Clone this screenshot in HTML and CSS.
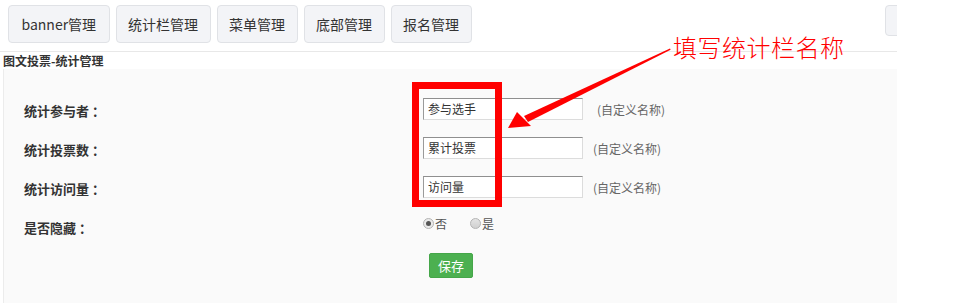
FILE: index.html
```html
<!DOCTYPE html>
<html lang="zh">
<head>
<meta charset="utf-8">
<link rel="stylesheet" href="styles.css">
</head>
<body>
<div class="page">
  <nav class="tabs">
    <a class="tab tab-first">banner管理</a>
    <a class="tab">统计栏管理</a>
    <a class="tab">菜单管理</a>
    <a class="tab">底部管理</a>
    <a class="tab">报名管理</a>
    <a class="tab tab-more"></a>
  </nav>
  <h2 class="title">图文投票-统计管理</h2>
  <section class="panel">
    <div class="row">
      <label class="label">统计参与者<span class="colon">：</span></label>
      <input class="field" type="text" value="参与选手">
      <span class="hint hint-first">(自定义名称)</span>
    </div>
    <div class="row">
      <label class="label">统计投票数<span class="colon">：</span></label>
      <input class="field" type="text" value="累计投票">
      <span class="hint">(自定义名称)</span>
    </div>
    <div class="row">
      <label class="label">统计访问量<span class="colon">：</span></label>
      <input class="field" type="text" value="访问量">
      <span class="hint">(自定义名称)</span>
    </div>
    <div class="row">
      <label class="label">是否隐藏<span class="colon">：</span></label>
      <div class="radios">
        <span class="radio checked"></span><span class="rtext">否</span>
        <span class="radio radio-2"></span><span class="rtext">是</span>
      </div>
    </div>
    <div class="row-btn">
      <button class="save">保存</button>
    </div>
  </section>
</div>
<div class="note">
  <div class="note-box"></div>
  <svg class="note-arrow" width="953" height="303" viewBox="0 0 953 303">
    <polygon points="670,48.5 670.6,49.8 528,122 524,116" fill="#ff0000"/>
    <polygon points="508,128 517,112 531,126" fill="#ff0000"/>
  </svg>
  <div class="note-text">填写统计栏名称</div>
</div>
</body>
</html>
```
FILE: styles.css
```css
* { box-sizing: border-box; }
html, body { margin: 0; padding: 0; background: #fff; }
body {
  font-family: "Noto Sans CJK SC", "Noto Sans", sans-serif;
  color: #333;
  width: 953px;
  height: 303px;
  overflow: hidden;
  position: relative;
}
.page {
  width: 897px;
  height: 303px;
  overflow: hidden;
  display: flex;
  flex-direction: column;
}
.tabs {
  display: flex;
  align-items: flex-start;
  gap: 6px;
  padding: 5px 0 0 8px;
  height: 52px;
  border-bottom: 1px solid #e8e8e8;
}
.tab {
  height: 38px;
  padding: 0 11.5px;
  display: flex;
  align-items: center;
  font-size: 14px;
  color: #333;
  background: #f3f4f7;
  border: 1px solid #e0e2e6;
  border-radius: 4px;
  white-space: nowrap;
}
.tab-first { padding: 0 12.5px; }
.tab-more {
  margin-left: auto;
  margin-right: -20px;
  width: 32px;
  height: 31px;
}
.title {
  margin: 0;
  padding: 1px 0 0 3px;
  height: 17px;
  font-size: 12px;
  line-height: 16px;
  font-weight: bold;
  color: #333;
}
.panel {
  flex: 1;
  margin-left: 3px;
  background: #fafafa;
  border-left: 1px solid #ececec;
  padding: 20px 0 0 20px;
}
.row {
  height: 39px;
  display: flex;
  align-items: center;
}
.label {
  width: 399px;
  font-size: 13px;
  font-weight: bold;
  color: #333;
  padding-top: 3px;
}
.colon { padding-left: 3px; }
.field {
  width: 160px;
  height: 22px;
  margin: 0;
  padding: 0 4px;
  font-family: "Noto Sans CJK SC", sans-serif;
  font-size: 12px;
  color: #333;
  background: #fff;
  border: 1px solid #dcdcdc;
  border-top-color: #8f8f8f;
  border-left-color: #9a9a9a;
  outline: none;
}
.hint {
  margin-left: 10px;
  font-size: 12px;
  color: #666;
  padding-top: 1px;
}
.hint-first { margin-left: 14px; }
.radios {
  display: flex;
  align-items: center;
  font-size: 12px;
  color: #555;
  margin-top: -4px;
}
.radio {
  width: 11px;
  height: 11px;
  border-radius: 50%;
  border: 1px solid #b4b4b4;
  background: linear-gradient(#e4e4e4, #d0d0d0);
  position: relative;
}
.radio.checked { background: #eaeaea; }
.radio.checked::after {
  content: "";
  position: absolute;
  left: 2px;
  top: 2px;
  width: 5px;
  height: 5px;
  border-radius: 50%;
  background: #555;
}
.radio-2 { margin-left: 23px; }
.rtext { margin-left: 1px; }
.row-btn {
  padding: 7px 0 0 405px;
}
.save {
  width: 44px;
  height: 25px;
  padding: 0;
  font-family: "Noto Sans CJK SC", sans-serif;
  font-size: 13px;
  color: #fff;
  background: #4cb050;
  border: 1px solid #45a649;
  border-radius: 2px;
}
.note {
  position: absolute;
  inset: 0;
  pointer-events: none;
}
.note-box {
  position: absolute;
  left: 412px;
  top: 82px;
  width: 90px;
  height: 125px;
  border: 7px solid #ff0000;
}
.note-arrow {
  position: absolute;
  left: 0;
  top: 0;
}
.note-text {
  position: absolute;
  left: 673px;
  top: 33px;
  font-size: 24px;
  line-height: 28px;
  color: #ff0000;
  font-weight: 300;
  letter-spacing: 0.5px;
}
```
